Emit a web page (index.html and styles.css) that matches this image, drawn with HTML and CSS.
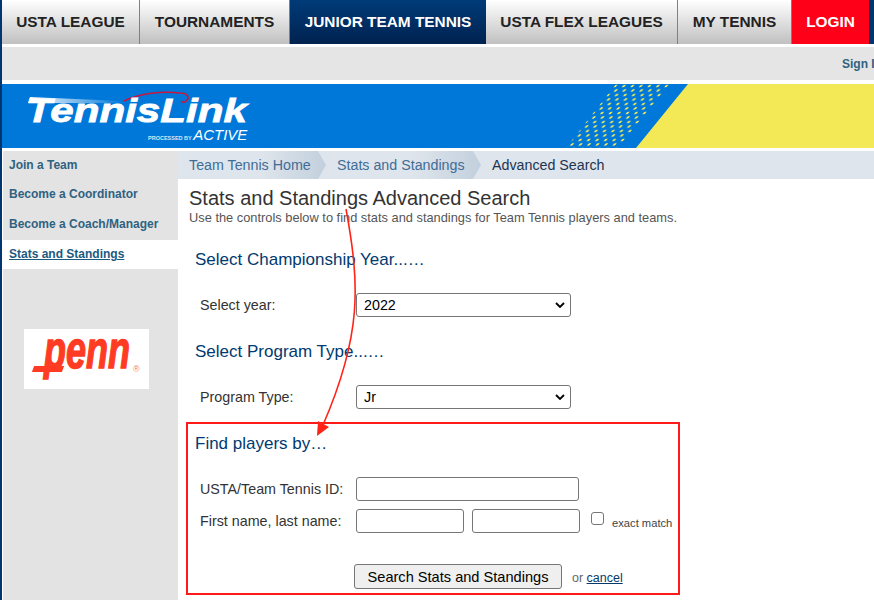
FILE: index.html
```html
<!DOCTYPE html>
<html lang="en">
<head>
  <meta charset="UTF-8">
  <meta name="viewport" content="width=device-width, initial-scale=1.0">
  <title>Stats and Standings Advanced Search</title>
  <link rel="stylesheet" href="styles.css">
</head>
<body>
<div class="page">
  <nav class="topnav">
    <a class="tab tab-league" href="#">USTA LEAGUE</a>
    <a class="tab tab-tourn" href="#">TOURNAMENTS</a>
    <a class="tab tab-junior" href="#">JUNIOR TEAM TENNIS</a>
    <a class="tab tab-flex" href="#">USTA FLEX LEAGUES</a>
    <a class="tab tab-my" href="#">MY TENNIS</a>
    <a class="tab tab-login" href="#">LOGIN</a>
  </nav>

  <div class="signbar"><a href="#">Sign In</a></div>

  <header class="banner">
    <svg class="banner-art" width="872" height="64" viewBox="0 0 872 64">
      <defs>
        <pattern id="dots" width="17" height="9" patternUnits="userSpaceOnUse" patternTransform="skewX(-39)">
          <circle cx="3" cy="2" r="1.35" fill="#f3e957"/>
          <circle cx="11.5" cy="2" r="1.35" fill="#f3e957"/>
          <circle cx="7" cy="6.5" r="1.35" fill="#f3e957"/>
          <circle cx="15.5" cy="6.5" r="1.35" fill="#f3e957"/>
        </pattern>
        <linearGradient id="streak" x1="0" x2="1" y1="0" y2="0">
          <stop offset="0" stop-color="#fff"/>
          <stop offset="1" stop-color="#fff" stop-opacity="0"/>
        </linearGradient>
      </defs>
      <polygon points="614,0 668,0 616,64 564,64" fill="url(#dots)"/>
      <polygon points="686,0 872,0 872,64 634,64" fill="#f3e957"/>
      <path d="M122 17 C 138 9, 160 7, 178 9 C 186 9, 188 14, 184 17 C 182 19, 180 18, 179 17" fill="none" stroke="#c8173c" stroke-width="1.6"/>
      <polygon points="28,13 120,17 120,19 26,19" fill="url(#streak)"/>
    </svg>
    <div class="logo">
      <span class="logo-name">TennisLink</span>
      <span class="logo-sub">PROCESSED BY <b>ACTIVE</b></span>
    </div>
  </header>

  <div class="columns">
    <aside class="sidebar">
      <ul class="sidemenu">
        <li><a href="#">Join a Team</a></li>
        <li><a href="#">Become a Coordinator</a></li>
        <li><a href="#">Become a Coach/Manager</a></li>
        <li class="active"><a href="#">Stats and Standings</a></li>
      </ul>
      <div class="sponsor">
        <span class="penn">penn</span>
        <i class="penn-bar"></i>
        <i class="penn-reg">&reg;</i>
      </div>
    </aside>

    <main class="content">
      <div class="crumbs">
        <a class="crumb crumb-home" href="#">Team Tennis Home</a>
        <a class="crumb crumb-stats" href="#">Stats and Standings</a>
        <span class="crumb-current">Advanced Search</span>
      </div>

      <h1>Stats and Standings Advanced Search</h1>
      <p class="intro">Use the controls below to find stats and standings for Team Tennis players and teams.</p>

      <h2 class="year-head">Select Championship Year...…</h2>
      <div class="row row-select">
        <label>Select year:</label>
        <select><option>2022</option></select>
      </div>

      <h2 class="program-head">Select Program Type...…</h2>
      <div class="row row-select">
        <label>Program Type:</label>
        <select><option>Jr</option></select>
      </div>

      <section class="findbox">
        <h2>Find players by…</h2>
        <div class="row row-id">
          <label>USTA/Team Tennis ID:</label>
          <input class="input-id" type="text">
        </div>
        <div class="row row-name">
          <label>First name, last name:</label>
          <input class="input-name" type="text">
          <input class="input-name" type="text">
          <input class="check" type="checkbox">
          <span class="exact">exact match</span>
        </div>
        <div class="actions">
          <button type="button">Search Stats and Standings</button>
          <span class="or">or <a href="#">cancel</a></span>
        </div>
      </section>
    </main>
  </div>

  <!-- red note drawn on top of the page -->
  <svg class="note" width="874" height="600" viewBox="0 0 874 600">
    <path d="M346 209 C 360 285, 362 335, 323 425" fill="none" stroke="#ff2418" stroke-width="1.6"/>
    <polygon points="317,436 318,421 329,427" fill="#ff2418"/>
  </svg>
</div>
</body>
</html>
```

FILE: styles.css
```css
html, body {
  margin: 0;
  padding: 0;
  height: 600px;
  overflow: hidden;
  background: white;
}

body {
  font-family: "Liberation Sans", Arial, sans-serif;
  color: #333;
}

.page {
  position: relative;
  width: 872px;
  height: 600px;
  border-left: 2px solid #00366f;
}

/* Top nav */
.topnav {
  display: flex;
  height: 44px;
  background: #00366f;
}

.tab {
  display: flex;
  align-items: center;
  justify-content: center;
  box-sizing: border-box;
  height: 44px;
  font-size: 15.4px;
  font-weight: bold;
  color: #222;
  text-decoration: none;
  background: linear-gradient(#ffffff, #c0c0c0);
  border-right: 1px solid #808080;
}

.tab-league { width: 138px; }
.tab-tourn { width: 150px; }
.tab-junior { width: 196px; color: white; background: linear-gradient(#003b78, #00224f); border-right: none; }
.tab-flex { width: 192px; }
.tab-my { width: 114px; }
.tab-login { width: 77px; color: white; background: #ff0019; border-right: none; }

.signbar {
  display: flex;
  align-items: center;
  height: 33px;
  margin-top: 3px;
  padding-left: 840px;
  background: #e5e5e5;
  white-space: nowrap;
}

.signbar a {
  font-size: 12px;
  font-weight: bold;
  color: #2f6281;
  text-decoration: none;
}

/* Banner */
.banner {
  position: relative;
  height: 64px;
  margin-top: 4px;
  background: #0078d9;
  overflow: hidden;
}

.banner-art {
  position: absolute;
  top: 0;
  left: 0;
}

.logo {
  position: relative;
  padding: 9px 0 0 24px;
  color: white;
}

.logo-name {
  display: block;
  height: 35px;
  font-size: 34px;
  line-height: 34px;
  font-weight: bold;
  font-style: italic;
  -webkit-text-stroke: 0.8px white;
  transform: scaleX(1.24);
  transform-origin: left;
}

.logo-sub {
  display: block;
  margin-left: 122px;
  font-size: 5.5px;
  line-height: 14px;
  font-weight: bold;
  color: #d8e6f5;
  white-space: nowrap;
}

.logo-sub b {
  font-size: 15px;
  font-style: italic;
  font-weight: normal;
  color: white;
}

/* Columns */
.columns {
  display: flex;
  margin-top: 3px;
  height: 449px;
}

.sidebar {
  width: 175px;
  margin-left: 1px;
  flex-shrink: 0;
  background: #e3e3e3;
}

.sidemenu {
  list-style: none;
  margin: 0;
  padding: 0;
}

.sidemenu li {
  display: flex;
  align-items: center;
  box-sizing: border-box;
  height: 29.5px;
  padding: 0 0 2px 6px;
  font-size: 12px;
  font-weight: bold;
}

.sidemenu a {
  color: #2f6281;
  text-decoration: none;
}

.sidemenu .active {
  padding-bottom: 0;
  background: white;
}

.sidemenu .active a {
  color: #1c5a80;
  text-decoration: underline;
}

.sponsor {
  position: relative;
  width: 125px;
  height: 60px;
  margin: 60px 0 0 21px;
  background: white;
  overflow: hidden;
}

.penn {
  position: absolute;
  left: 20px;
  top: -4px;
  font-size: 36px;
  line-height: 36px;
  font-weight: bold;
  font-style: italic;
  color: #ff3b24;
  -webkit-text-stroke: 1px #ff3b24;
  transform: scaleY(1.42);
  transform-origin: top;
}

.penn-bar {
  position: absolute;
  left: 9px;
  top: 37px;
  width: 30px;
  height: 6px;
  background: #ff3b24;
  transform: skewX(-20deg);
}

.penn-reg {
  position: absolute;
  left: 109px;
  top: 35px;
  font-size: 9px;
  font-style: normal;
  color: #ff7a68;
}

/* Main content */
.content {
  flex: 1;
  min-width: 0;
}

.crumbs {
  display: flex;
  align-items: center;
  height: 28px;
  background: #dfe5ec;
  font-size: 14.25px;
  white-space: nowrap;
}

.crumb {
  display: flex;
  align-items: center;
  box-sizing: border-box;
  height: 28px;
  color: #3f6d97;
  text-decoration: none;
  background: linear-gradient(to right, #dfe5ec 55%, #c2d0dd);
  clip-path: polygon(0 0, calc(100% - 8px) 0, 100% 50%, calc(100% - 8px) 100%, 0 100%);
}

.crumb-home { width: 148px; padding-left: 11px; }
.crumb-stats { width: 154px; margin-left: 1px; padding-left: 10px; }

.crumb-current {
  margin-left: 11px;
  color: #1c3550;
}

h1 {
  margin: 8px 0 0 11px;
  font-size: 20px;
  line-height: 22px;
  font-weight: normal;
  color: #333;
}

.intro {
  margin: 1px 0 0 11px;
  font-size: 12.83px;
  line-height: 16px;
  color: #555;
}

h2 {
  margin: 0;
  font-size: 17px;
  line-height: 20px;
  font-weight: normal;
  color: #003a70;
}

.year-head { margin: 24px 0 0 17px; }
.program-head { margin: 25px 0 0 17px; }

.row {
  display: flex;
  align-items: center;
  font-size: 14.3px;
  color: #333;
}

.row label {
  width: 156px;
  flex-shrink: 0;
}

.row-select {
  margin: 23px 0 0 22px;
}

select {
  appearance: none;
  box-sizing: border-box;
  width: 215px;
  height: 24px;
  padding: 0 0 0 7px;
  font-family: "Liberation Sans", Arial, sans-serif;
  font-size: 14.3px;
  color: black;
  border: 1px solid #767676;
  border-radius: 3px;
  background: white url("data:image/svg+xml;utf8,<svg xmlns='http://www.w3.org/2000/svg' width='10' height='6'><path d='M1 1 L5 5 L9 1' fill='none' stroke='black' stroke-width='1.8'/></svg>") no-repeat right 5px center;
}

input[type="text"] {
  box-sizing: border-box;
  height: 24px;
  margin: 0;
  padding: 0;
  border: 1px solid #767676;
  border-radius: 3px;
  background: white;
}

.findbox {
  box-sizing: border-box;
  width: 494px;
  height: 173px;
  margin: 13px 0 0 8px;
  padding: 10px 0 0 7px;
  border: 2px solid #ff1a1a;
}

.row-id {
  margin: 23px 0 0 5px;
}

.row-name {
  margin: 8px 0 0 5px;
}

.input-id { width: 223px; }
.input-name { width: 108px; margin-right: 8px !important; }

.check {
  appearance: none;
  box-sizing: border-box;
  width: 13px;
  height: 13px;
  margin: -5px 0 0 3px;
  border: 1px solid #767676;
  border-radius: 3px;
  background: white;
}

.exact {
  margin: 3px 0 0 8px;
  font-size: 11.2px;
  color: #444;
}

.actions {
  display: flex;
  align-items: center;
  margin: 31px 0 0 159px;
}

button {
  box-sizing: border-box;
  width: 208px;
  height: 25px;
  padding: 0;
  font-family: "Liberation Sans", Arial, sans-serif;
  font-size: 14.6px;
  color: black;
  background: #efefef;
  border: 1px solid #767676;
  border-radius: 3px;
}

.or {
  margin: 2px 0 0 10px;
  font-size: 12.5px;
  color: #666;
}

.or a {
  color: #063a6b;
}

/* Annotation */
.note {
  position: absolute;
  top: 0;
  left: -2px;
  pointer-events: none;
}
```
